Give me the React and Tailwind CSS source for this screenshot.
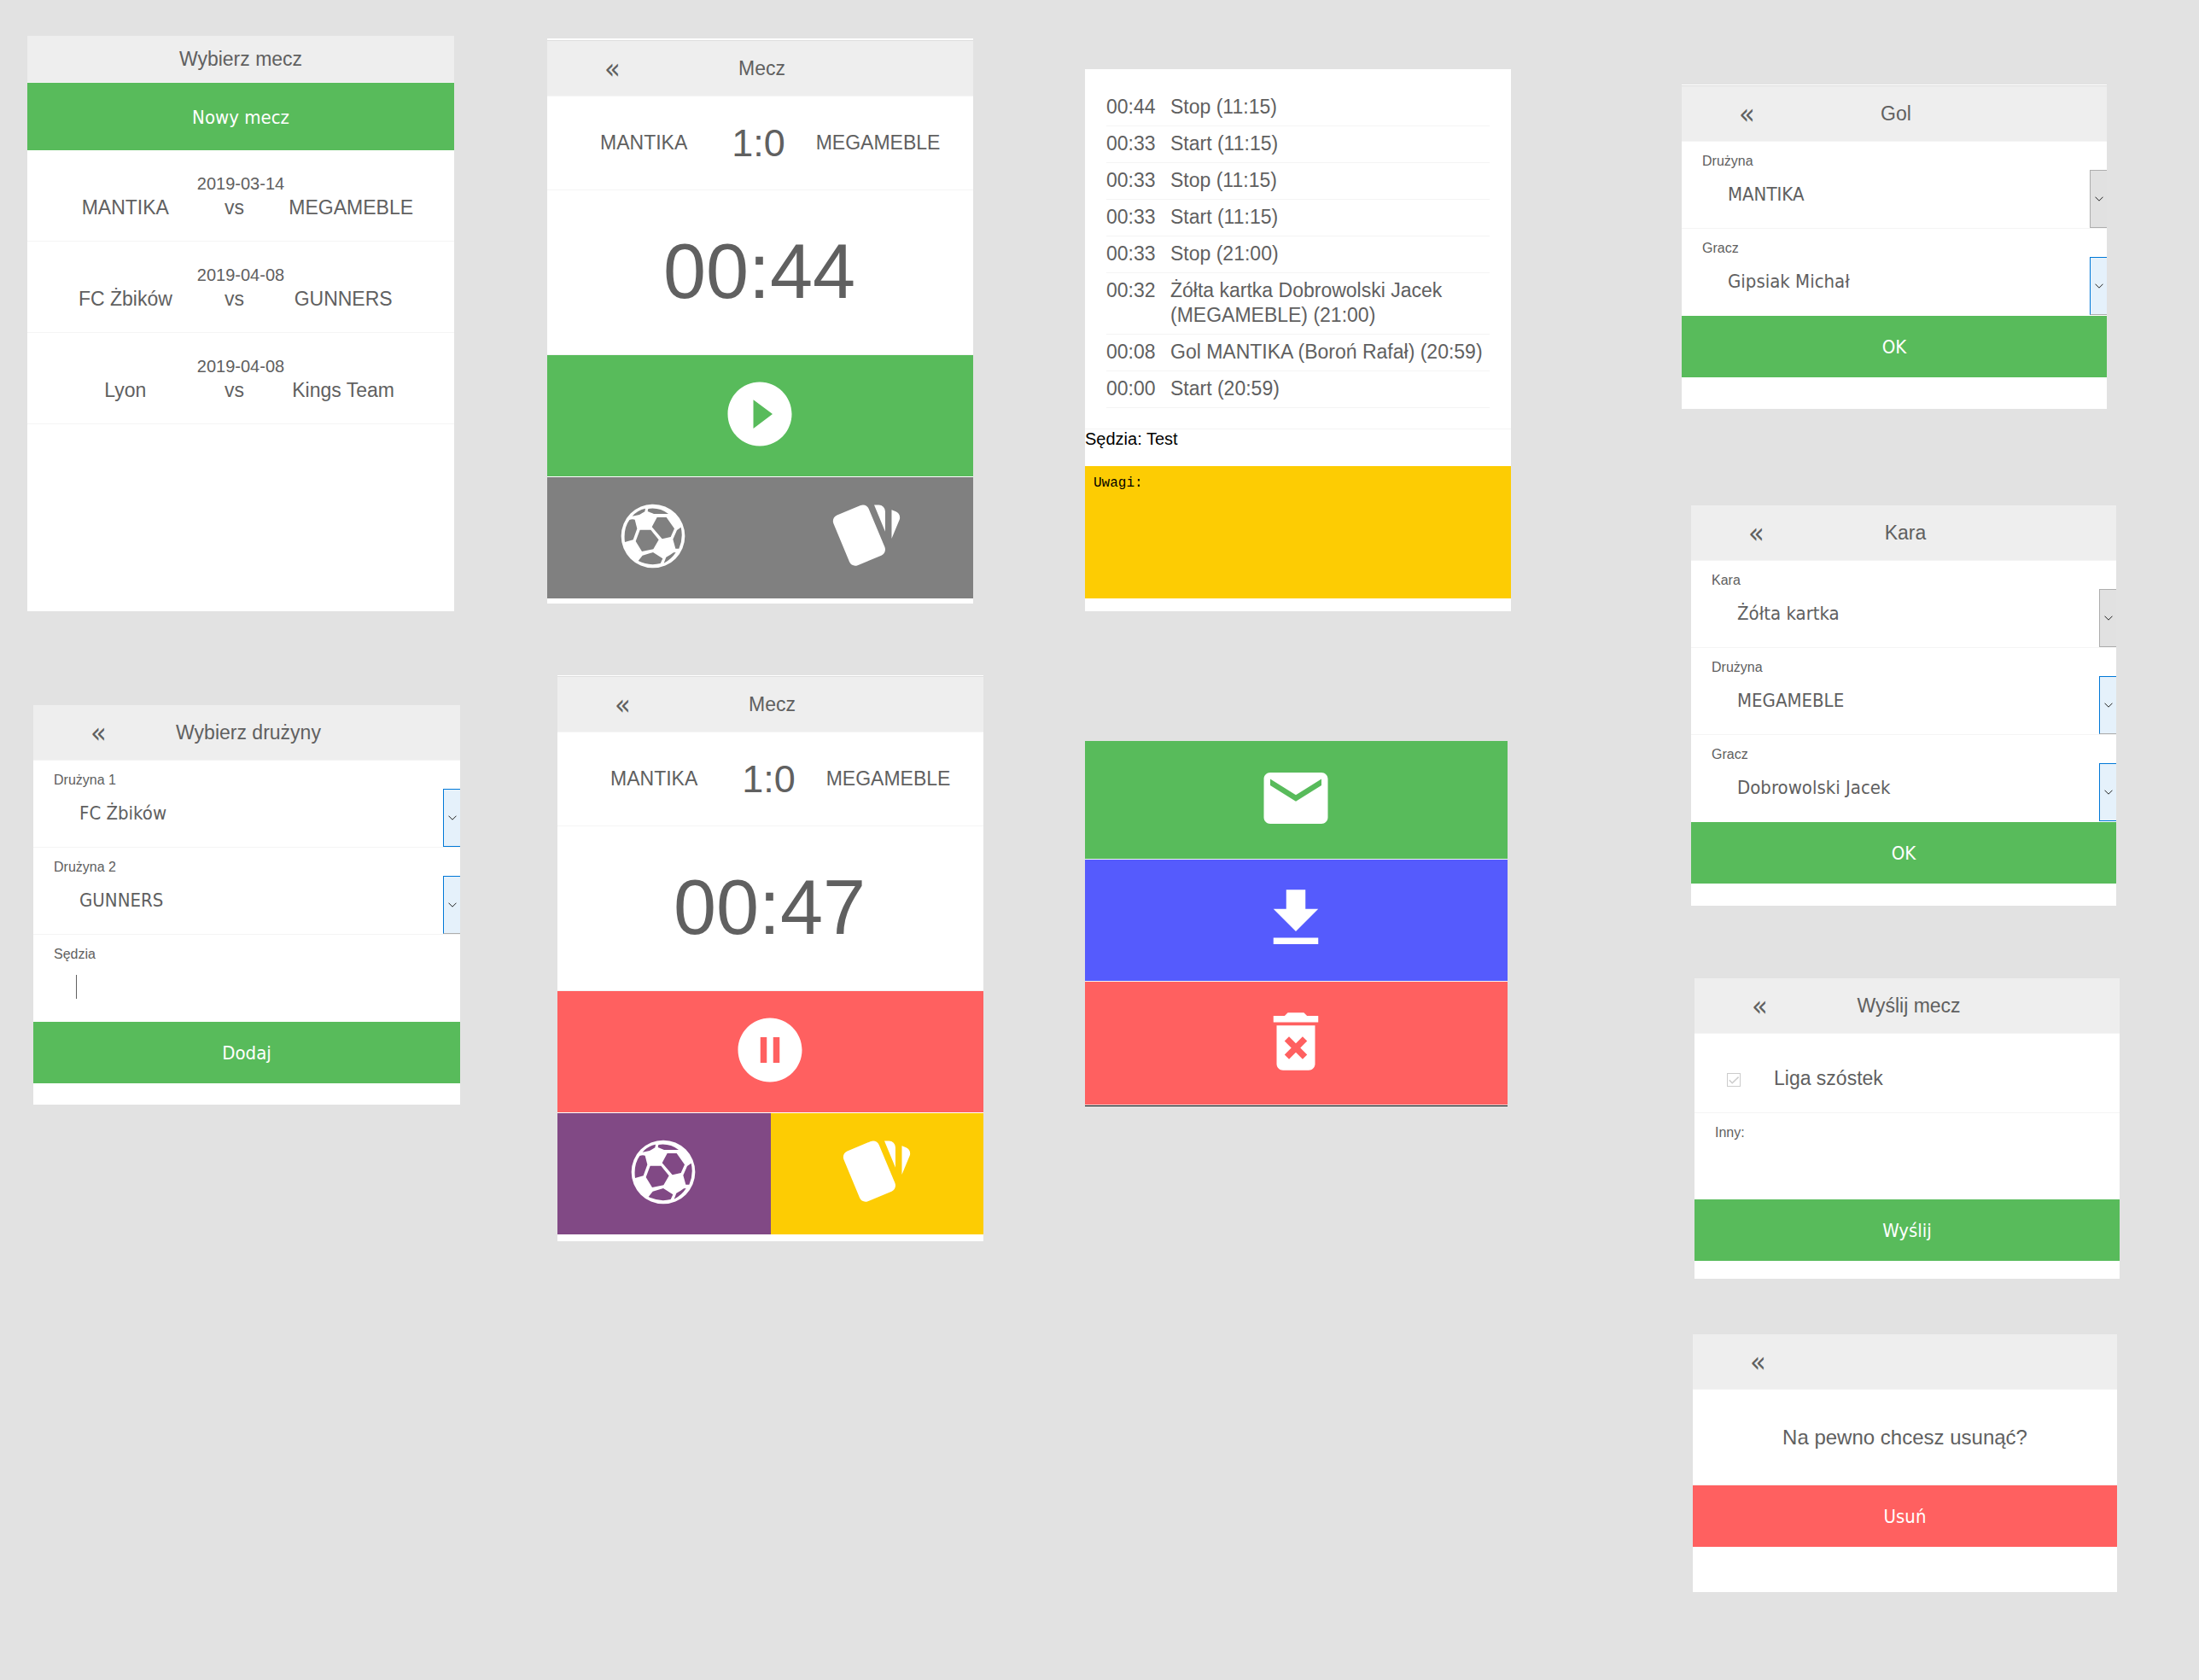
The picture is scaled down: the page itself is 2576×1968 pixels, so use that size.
import React, { useId } from "react";

const UI = "font-['Liberation_Sans',Arial,sans-serif]";
const CONTROL = "font-['DejaVu_Sans_Condensed','DejaVu_Sans',sans-serif]";

/* ---------- icons (24 x 24 grid unless noted) ---------- */

function Glyph({ d }) {
  return (
    <svg viewBox="0 0 24 24" className="size-[90px] fill-current" aria-hidden="true">
      <path fillRule="evenodd" d={d} />
    </svg>
  );
}

const PLAY = "M12 2C6.48 2 2 6.48 2 12s4.48 10 10 10 10-4.48 10-10S17.52 2 12 2zm-2 14.5v-9l6 4.5-6 4.5z";
const PAUSE =
  "M12 2C6.48 2 2 6.48 2 12s4.48 10 10 10 10-4.48 10-10S17.52 2 12 2zm-1 14H9V8h2v8zm4 0h-2V8h2v8z";
const CARDS =
  "M21.47,4.35L20.13,3.79V12.82L22.56,6.96C22.97,5.94 22.5,4.77 21.47,4.35M1.97,8.05L6.93,20C7.24,20.77 7.97,21.24 8.74,21.26C9,21.26 9.27,21.21 9.53,21.1L16.9,18.05C17.65,17.74 18.11,17 18.13,16.26C18.14,16 18.09,15.71 18,15.45L13,3.5C12.71,2.73 11.97,2.26 11.19,2.25C10.93,2.25 10.67,2.31 10.42,2.4L3.06,5.45C2.04,5.87 1.55,7.04 1.97,8.05M18.12,4.25A2,2 0 0,0 16.12,2.25H14.67L18.12,10.59";
const MAIL =
  "M20 4H4c-1.1 0-1.99.9-1.99 2L2 18c0 1.1.9 2 2 2h16c1.1 0 2-.9 2-2V6c0-1.1-.9-2-2-2zm0 4l-8 5-8-5V6l8 5 8-5v2z";
const DOWNLOAD = "M19 9h-4V3H9v6H5l7 7 7-7zM5 18v2h14v-2H5z";
const DELETE =
  "M6 19c0 1.1.9 2 2 2h8c1.1 0 2-.9 2-2V7H6v12zm2.46-7.12l1.41-1.41L12 12.59l2.12-2.12 1.41 1.41L13.41 14l2.12 2.12-1.41 1.41L12 15.41l-2.12 2.12-1.41-1.41L10.59 14l-2.13-2.12zM15.5 4l-1-1h-5l-1 1H5v2h14V4h-3.5z";

function Ball() {
  return (
    <svg viewBox="-2 -4 270 270" className="size-[90px] fill-current" aria-hidden="true">
      <path
        fillRule="evenodd"
        d="M133 19a112 112 0 1 0 0 224a112 112 0 1 0 0-224z
           M87 109L125 109L153 144L134 177L94 185L72 149z
           M147 65L180 65L208 105L195 134L165 141L129 99z
           M50 74Q60 70 69 73L77 105L63 144L34 152Q28 105 50 74z
           M96 199L133 188L167 210L159 227Q120 237 81 218z
           M116 35Q155 29 187 53L136 53L114 44z
           M60 61Q78 40 106 34L104 45L85 56z
           M217 110L231 100Q240 138 224 175L212 175L203 142z
           M171 226L179 205Q195 197 205 189L213 188Q198 212 171 226z"
      />
    </svg>
  );
}

/* ---------- shared pieces ---------- */

function Screen({ className, children }) {
  return <section className={`bg-white ${className}`}>{children}</section>;
}

function Header({ title, back = true }) {
  return (
    <header className="grid h-[65px] grid-cols-[1fr_auto_1fr] items-center border-b border-[#f4f4f4] bg-[#eeeeee]">
      <div className="pl-[67px]">
        {back && (
          <button type="button" aria-label="Wstecz" className={`${CONTROL} block text-[34px] leading-9`}>
            «
          </button>
        )}
      </div>
      <h2 className="pb-px pl-1 text-[23px] leading-7">{title}</h2>
    </header>
  );
}

function TopEdge({ white }) {
  return <div className={`border-b border-[#dedede] bg-white ${white}`} />;
}

function Action({ tone, children }) {
  return (
    <button
      type="submit"
      className={`${CONTROL} block h-[72px] w-full pt-0.5 text-[22px] leading-7 text-white ${tone}`}
    >
      {children}
    </button>
  );
}

function IconAction({ tone, label, size = "h-[142px]", children }) {
  return (
    <button
      type="button"
      aria-label={label}
      className={`flex w-full items-center justify-center pr-0.5 pb-1 text-white ${size} ${tone}`}
    >
      {children}
    </button>
  );
}

const ARROWS = {
  grey: "border-[#adadad] bg-[#e1e1e1]",
  blue: "border-[#0078d7] bg-[#e5f1fb]",
  cut: "border-[#0078d7] border-b-[#adadad] bg-[#e5f1fb]",
};

function SelectRow({ label, value, arrow, last }) {
  const id = useId();
  return (
    <div className={`border-b pt-[13px] ${last ? "border-white" : "border-[#f4f4f4]"}`}>
      <label htmlFor={id} className="block pl-6 text-base leading-5">
        {label}
      </label>
      <div className="relative">
        <select
          id={id}
          defaultValue={value}
          className={`${CONTROL} block h-[68px] w-full appearance-none bg-transparent pb-[11px] pl-[54px] text-[22px] outline-none`}
        >
          <option>{value}</option>
        </select>
        <span
          className={`pointer-events-none absolute inset-y-0 right-0 flex w-5 items-center justify-center border-y border-l ${ARROWS[arrow]}`}
        >
          <svg viewBox="0 0 10 6" className="h-1.5 w-2.5 fill-none stroke-[#222222]" aria-hidden="true">
            <path d="M0.5 0.7L5 5.2L9.5 0.7" />
          </svg>
        </span>
      </div>
    </div>
  );
}

/* ---------- screens ---------- */

const MATCHES = [
  ["2019-03-14", "MANTIKA", "MEGAMEBLE"],
  ["2019-04-08", "FC Żbików", "GUNNERS"],
  ["2019-04-08", "Lyon", "Kings Team"],
];

function MatchList() {
  return (
    <Screen className="mr-[7px] pb-[219px]">
      <header className="flex h-[55px] items-center justify-center border-b border-[#f4f4f4] bg-[#eeeeee]">
        <h2 className="text-[23px] leading-7">Wybierz mecz</h2>
      </header>
      <button type="button" className={`${CONTROL} block h-[79px] w-full bg-[#58bb5b] pt-0.5 text-[22px] text-white`}>
        Nowy mecz
      </button>
      <ul>
        {MATCHES.map(([date, home, away]) => (
          <li key={home} className="border-b border-[#f4f4f4] pt-[27px] pb-[23px] text-center">
            <div className="text-xl leading-6">{date}</div>
            <div className="grid grid-cols-3 pr-[66px] pl-[51px] text-[23px] leading-8 whitespace-nowrap">
              <span>{home}</span>
              <span>vs</span>
              <span>{away}</span>
            </div>
          </li>
        ))}
      </ul>
    </Screen>
  );
}

function TeamForm() {
  return (
    <Screen className="mt-[110px] ml-[7px] pb-[25px]">
      <Header title="Wybierz drużyny" />
      <SelectRow label="Drużyna 1" value="FC Żbików" arrow="blue" />
      <SelectRow label="Drużyna 2" value="GUNNERS" arrow="cut" />
      <div className="pt-[13px]">
        <label htmlFor="referee" className="block pl-6 text-base leading-5">
          Sędzia
        </label>
        <div className="flex h-[69px] items-start pt-[14px] pl-[50px]">
          <span className="h-7 w-px bg-[#606060]" />
          <input id="referee" type="text" className="h-7 w-full min-w-0 text-[22px] caret-transparent outline-none" />
        </div>
      </div>
      <Action tone="bg-[#58bb5b]">Dodaj</Action>
    </Screen>
  );
}

function Match({ className, white, time, main, ball, cards }) {
  return (
    <Screen className={className}>
      <TopEdge white={white} />
      <Header title="Mecz" />
      <div className="grid h-[110px] grid-cols-3 items-center border-b border-[#f4f4f4] pr-[50px] pl-[46px] text-center text-[23px] whitespace-nowrap">
        <span>MANTIKA</span>
        <strong className="text-[45px] leading-[50px] font-normal">1:0</strong>
        <span>MEGAMEBLE</span>
      </div>
      <div className="flex h-[193px] items-center justify-center border-b border-[#f4f4f4] pr-0.5 pb-0.5 text-[90px] leading-none">
        {time}
      </div>
      {main}
      <div className="mt-px flex">
        <IconAction tone={ball} label="Gol">
          <Ball />
        </IconAction>
        <IconAction tone={cards} label="Kara">
          <Glyph d={CARDS} />
        </IconAction>
      </div>
    </Screen>
  );
}

const EVENTS = [
  ["00:44", "Stop (11:15)"],
  ["00:33", "Start (11:15)"],
  ["00:33", "Stop (11:15)"],
  ["00:33", "Start (11:15)"],
  ["00:33", "Stop (21:00)"],
  ["00:32", "Żółta kartka Dobrowolski Jacek (MEGAMEBLE) (21:00)"],
  ["00:08", "Gol MANTIKA (Boroń Rafał) (20:59)"],
  ["00:00", "Start (20:59)"],
];

function EventLog() {
  return (
    <Screen className="pb-[15px]">
      <div className="border-b border-[#f4f4f4] px-[25px] pt-6 pb-6">
        <table className="w-full border-collapse text-[23px] leading-[29px]">
          <tbody>
            {EVENTS.map(([time, text], i) => (
              <tr key={i} className="border-b border-[#f4f4f4] align-top">
                <td className="w-[75px] pt-1.5 pb-[7px]">{time}</td>
                <td className="pt-1.5 pb-[7px]">{text}</td>
              </tr>
            ))}
          </tbody>
        </table>
      </div>
      <p className="h-[43px] text-xl leading-[22px] text-black">Sędzia: Test</p>
      <textarea
        aria-label="Uwagi"
        defaultValue="Uwagi:"
        className="block h-[155px] w-full resize-none bg-[#fdcc03] px-2.5 py-2.5 font-['Liberation_Mono','Courier_New',monospace] text-base leading-5 text-black outline-none"
      />
    </Screen>
  );
}

function MatchTools() {
  return (
    <div className="mt-[152px] mr-1 grid gap-px border-b border-black bg-[#f4f4f4] pb-px">
      <IconAction tone="bg-[#58bb5b]" label="Wyślij" size="h-[138px]">
        <Glyph d={MAIL} />
      </IconAction>
      <IconAction tone="bg-[#555bfd]" label="Pobierz">
        <Glyph d={DOWNLOAD} />
      </IconAction>
      <IconAction tone="bg-[#ff6060]" label="Usuń" size="h-36">
        <Glyph d={DELETE} />
      </IconAction>
    </div>
  );
}

function GoalForm() {
  return (
    <Screen className="mr-[17px] pb-[37px]">
      <TopEdge white="pt-px" />
      <Header title="Gol" />
      <SelectRow label="Drużyna" value="MANTIKA" arrow="grey" />
      <SelectRow label="Gracz" value="Gipsiak Michał" arrow="cut" last />
      <Action tone="bg-[#58bb5b]">OK</Action>
    </Screen>
  );
}

function PenaltyForm() {
  return (
    <Screen className="mt-[113px] mr-[6px] ml-[11px] pb-[26px]">
      <Header title="Kara" />
      <SelectRow label="Kara" value="Żółta kartka" arrow="grey" />
      <SelectRow label="Drużyna" value="MEGAMEBLE" arrow="cut" />
      <SelectRow label="Gracz" value="Dobrowolski Jacek" arrow="blue" last />
      <Action tone="bg-[#58bb5b]">OK</Action>
    </Screen>
  );
}

function SendForm() {
  return (
    <Screen className="mt-[85px] mr-[2px] ml-[15px] pb-[21px]">
      <Header title="Wyślij mecz" />
      <div className="flex h-[93px] items-center border-b border-[#f4f4f4] pt-3 pl-[38px]">
        <span className="relative mt-1 size-4">
          <input
            id="league"
            type="checkbox"
            defaultChecked
            disabled
            className="block size-4 appearance-none border border-[#cccccc] bg-white"
          />
          <svg
            viewBox="0 0 16 16"
            className="pointer-events-none absolute inset-0 fill-none stroke-[#cccccc] stroke-[1.5]"
            aria-hidden="true"
          >
            <path d="M2.8 8.2L6.2 11.8L13.6 4.6" />
          </svg>
        </span>
        <label htmlFor="league" className="pl-[39px] text-[23px] leading-7">
          Liga szóstek
        </label>
      </div>
      <div className="h-[101px] pt-[13px]">
        <label htmlFor="other" className="block pl-6 text-base leading-5">
          Inny:
        </label>
        <input id="other" type="text" className="block h-[60px] w-full px-[50px] text-[22px] outline-none" />
      </div>
      <Action tone="bg-[#58bb5b]">Wyślij</Action>
    </Screen>
  );
}

function DeleteConfirm() {
  return (
    <Screen className="mt-[65px] mr-[5px] ml-[13px] pb-[53px]">
      <Header />
      <p className="flex h-[112px] items-center justify-center border-b border-[#f4f4f4] text-2xl">
        Na pewno chcesz usunąć?
      </p>
      <Action tone="bg-[#ff6060]">Usuń</Action>
    </Screen>
  );
}

export default function App() {
  return (
    <main
      className={`${UI} grid min-h-screen grid-cols-[609fr_630fr_699fr_515fr] bg-[#e2e2e2] pr-[91px] pl-8 text-[#606060]`}
    >
      <div className="pt-[42px] pr-[102px]">
        <MatchList />
        <TeamForm />
      </div>
      <div className="pt-[45px] pr-[119px]">
        <Match
          className="mr-3 pb-[6px]"
          white="pt-0.5"
          time="00:44"
          ball="bg-[#808080]"
          cards="bg-[#808080]"
          main={
            <IconAction tone="bg-[#58bb5b]" label="Start">
              <Glyph d={PLAY} />
            </IconAction>
          }
        />
        <Match
          className="mt-[84px] ml-3 pb-2"
          white="pt-px"
          time="00:47"
          ball="bg-[#814985]"
          cards="bg-[#fdcc03]"
          main={
            <IconAction tone="bg-[#ff6060]" label="Pauza">
              <Glyph d={PAUSE} />
            </IconAction>
          }
        />
      </div>
      <div className="pt-[81px] pr-[200px]">
        <EventLog />
        <MatchTools />
      </div>
      <div className="pt-[99px] pb-[103px]">
        <GoalForm />
        <PenaltyForm />
        <SendForm />
        <DeleteConfirm />
      </div>
    </main>
  );
}
